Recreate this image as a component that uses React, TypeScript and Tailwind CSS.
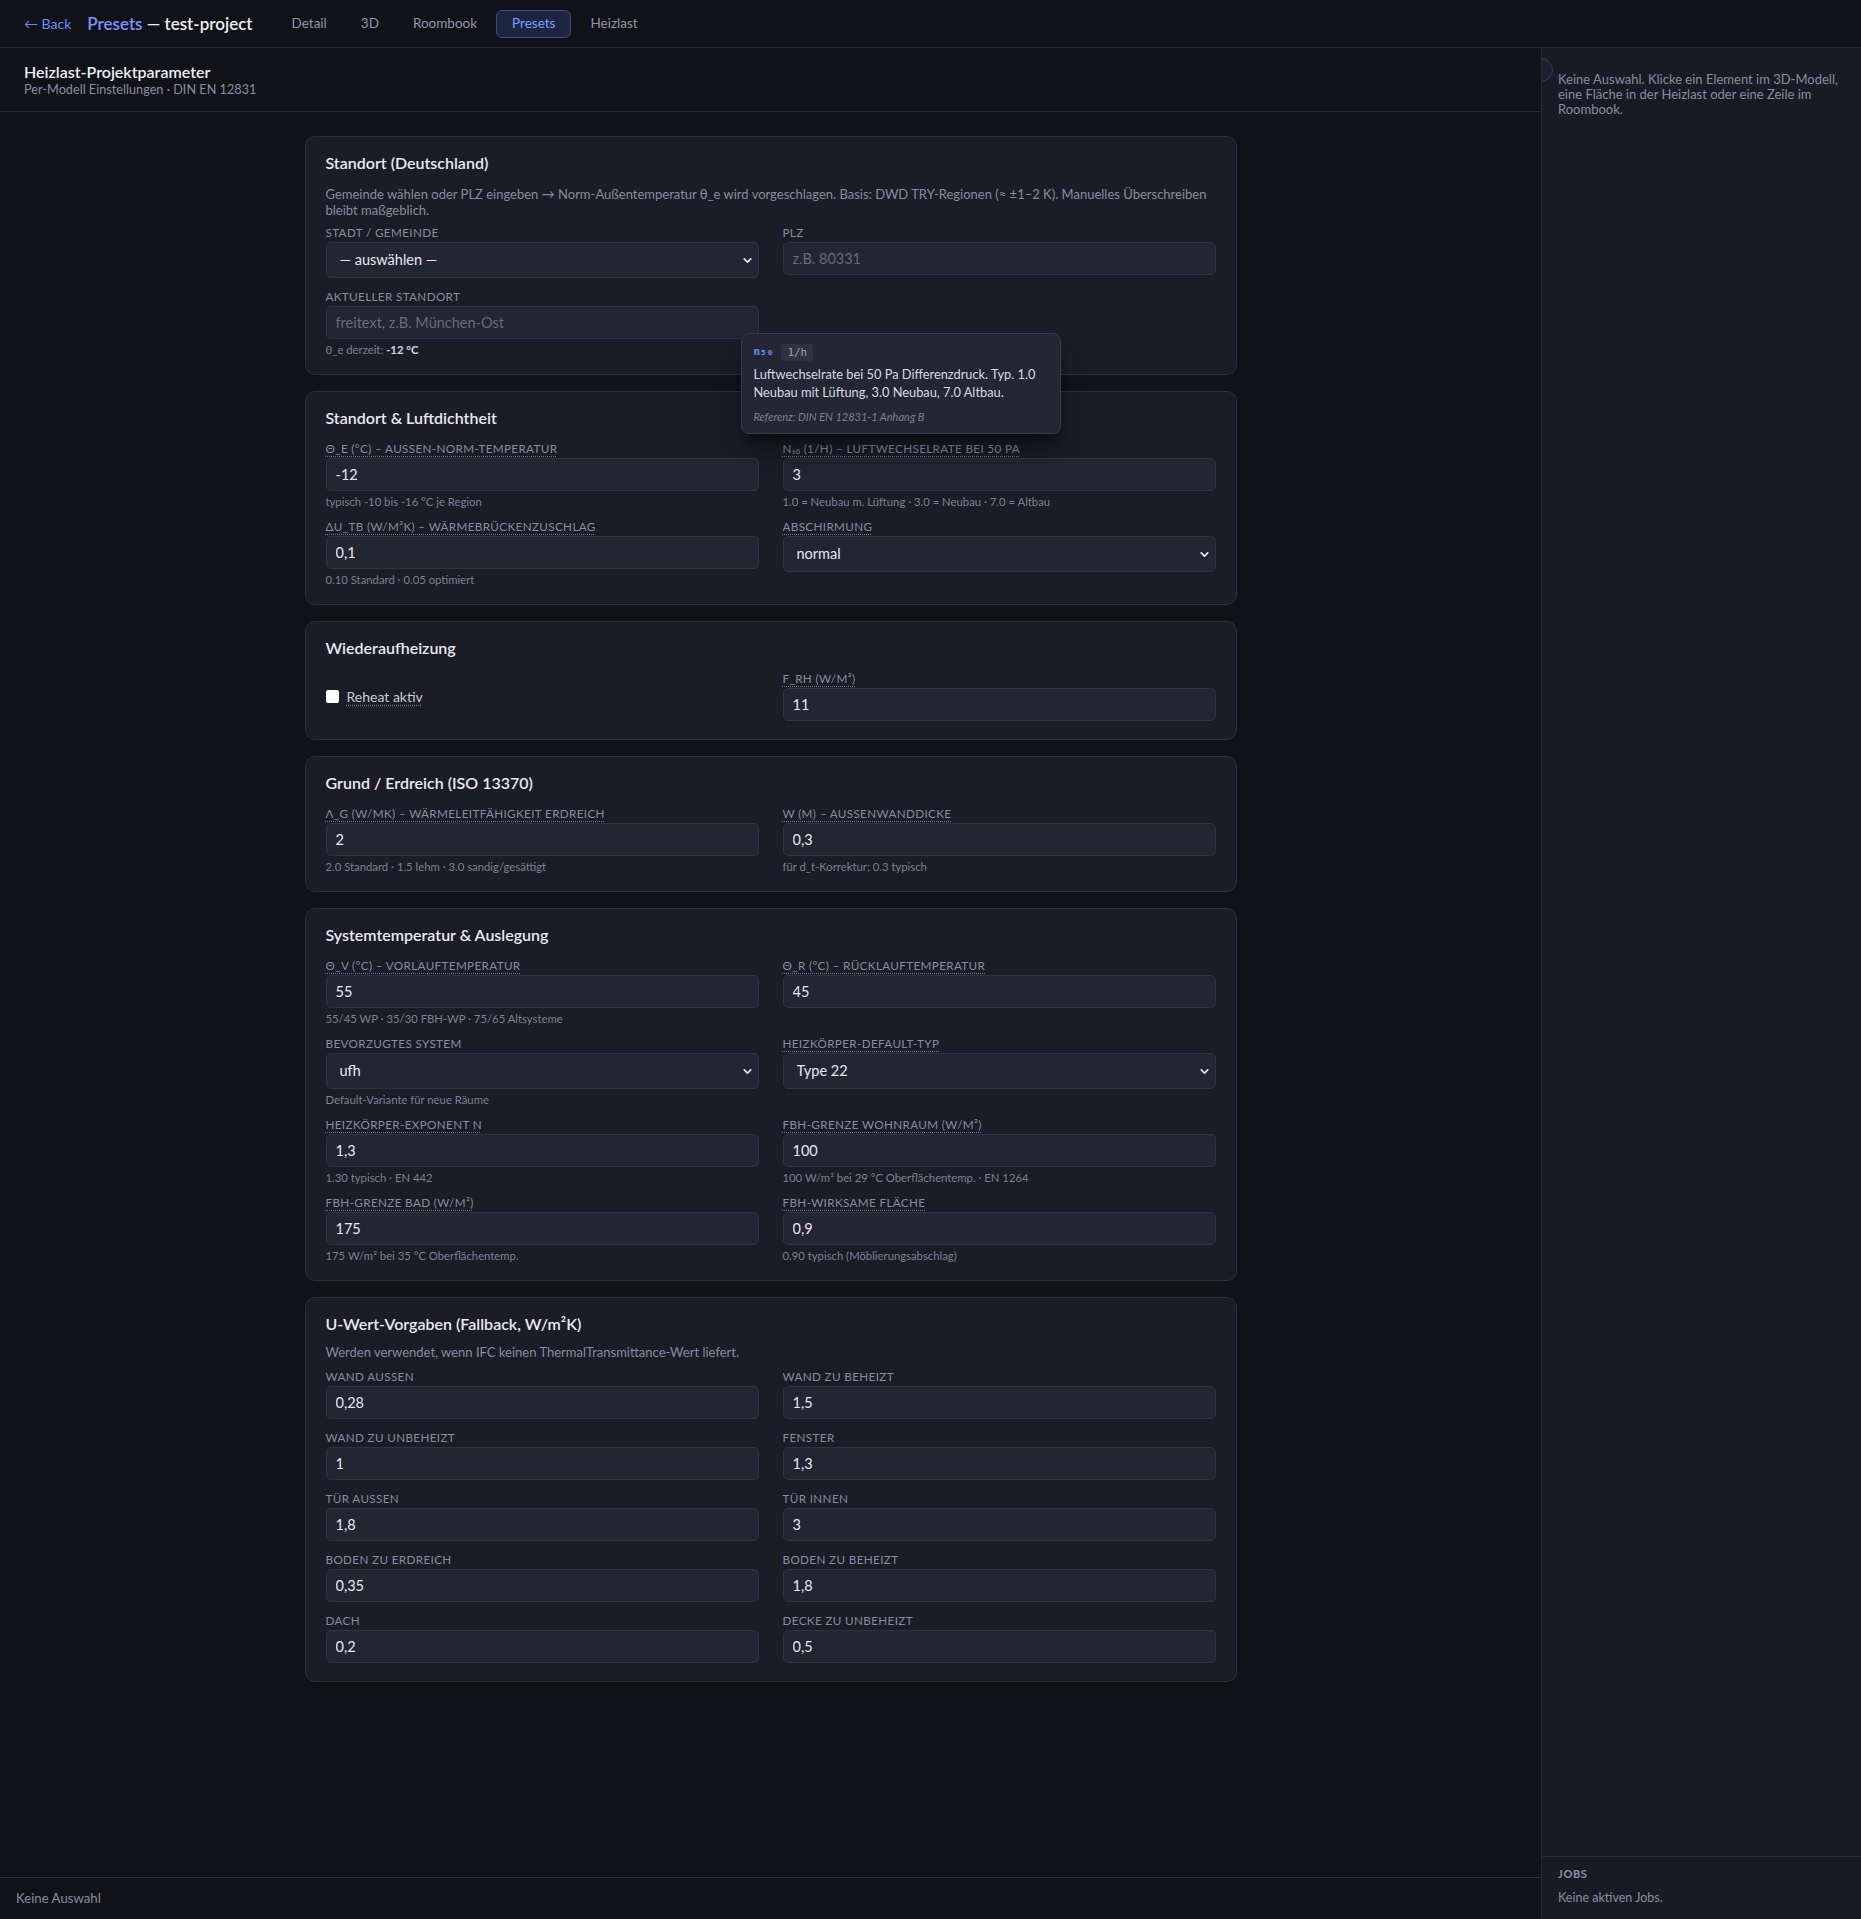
import React from "react";
import { ChevronDown, ChevronRight } from "lucide-react";

type FieldProps = {
  label: React.ReactNode;
  underline?: boolean;
  value?: string;
  placeholder?: string;
  hint?: React.ReactNode;
  select?: boolean;
};

function Field({ label, underline, value, placeholder, hint, select }: FieldProps) {
  return (
    <div className="flex flex-col">
      <label className="block text-[11.7px] leading-[14px] tracking-[0.03em] text-[#878ca0]">
        {underline ? (
          <span className="underline decoration-dotted decoration-[#697086] underline-offset-[3px]">{label}</span>
        ) : (
          label
        )}
      </label>
      {select ? (
        <div className="relative mt-[3px]">
          <select
            defaultValue={value}
            className="h-[36px] w-full appearance-none rounded-[5px] border border-[#2e3244] bg-[#222532] pl-[13px] pr-8 text-[14.5px] text-[#e6e8ee] outline-none"
          >
            <option value={value}>{value}</option>
          </select>
          <ChevronDown
            size={13}
            strokeWidth={3.2}
            className="pointer-events-none absolute right-[5px] top-[11.5px] text-[#e6e8ee]"
          />
        </div>
      ) : (
        <input
          defaultValue={value}
          placeholder={placeholder}
          className="mt-[3px] h-[33px] w-full rounded-[5px] border border-[#2e3244] bg-[#222532] px-[9px] text-[14.5px] text-[#e6e8ee] outline-none placeholder:text-[#676c7e]"
        />
      )}
      {hint ? <div className="mt-1 text-[11.3px] leading-[13px] text-[#7b8195]">{hint}</div> : null}
    </div>
  );
}

function Card({
  title,
  desc,
  descClass,
  children,
}: {
  title: string;
  desc?: string;
  descClass?: string;
  children: React.ReactNode;
}) {
  return (
    <section className="rounded-[10px] border border-[#2a2e3e] bg-[#1a1c26] px-5 pt-[15px] pb-[18px]">
      <h2 className="text-[16px] leading-[22px] font-semibold text-[#e8eaf0]">{title}</h2>
      {desc ? (
        <p className={"text-[13px] leading-[16px] text-[#878ca0] " + (descClass ?? "")}>{desc}</p>
      ) : (
        <div className="h-3" />
      )}
      {children}
    </section>
  );
}

const grid = "grid grid-cols-2 gap-x-6 gap-y-[11px]";

export default function App() {
  const tabs = ["Detail", "3D", "Roombook", "Presets", "Heizlast"];
  return (
    <div className="flex h-screen flex-col bg-[#111218] font-['Lato',sans-serif] text-[#e6e8ee]">
      {/* Top bar */}
      <header className="flex h-12 shrink-0 items-center border-b border-[#272a37] px-6">
        <span className="text-[14px] text-[#6d8bff]">← Back</span>
        <span className="ml-4 text-[17px] font-semibold">
          <span className="text-[#7a96ff]">Presets</span>
          <span className="text-[#eceef3]"> — test-project</span>
        </span>
        <nav className="ml-[24px] flex items-center gap-1">
          {tabs.map((t) =>
            t === "Presets" ? (
              <span
                key={t}
                className="flex h-[28px] items-center rounded-[6px] border border-[#3a4c85] bg-[#1d2540] px-[15px] text-[13.5px] text-[#809dff]"
              >
                {t}
              </span>
            ) : (
              <span key={t} className="flex h-[28px] items-center px-[15px] text-[13.5px] text-[#9196a8]">
                {t}
              </span>
            )
          )}
        </nav>
      </header>

      <div className="flex min-h-0 flex-1">
        {/* Main */}
        <main className="flex min-w-0 flex-1 flex-col">
          <div className="shrink-0 border-b border-[#272a37] px-6 py-[14px]">
            <div className="text-[16px] leading-[20px] font-semibold text-[#eceef3]">Heizlast-Projektparameter</div>
            <div className="text-[12.7px] leading-[15px] text-[#878ca0]">Per-Modell Einstellungen · DIN EN 12831</div>
          </div>

          <div className="min-h-0 flex-1 overflow-hidden pt-6">
            <div className="relative mx-auto flex w-[932px] flex-col gap-4">
              <Card
                title="Standort (Deutschland)"
                descClass="mt-[12px] mb-[7px]"
                desc="Gemeinde wählen oder PLZ eingeben → Norm-Außentemperatur θ_e wird vorgeschlagen. Basis: DWD TRY-Regionen (≈ ±1–2 K). Manuelles Überschreiben bleibt maßgeblich."
              >
                <div className={grid}>
                  <Field label="STADT / GEMEINDE" select value="— auswählen —" />
                  <Field label="PLZ" placeholder="z.B. 80331" />
                  <Field
                    label="AKTUELLER STANDORT"
                    placeholder="freitext, z.B. München-Ost"
                    hint={
                      <>
                        θ_e derzeit: <span className="font-bold text-[#d6d9e2]">-12 °C</span>
                      </>
                    }
                  />
                  <div />
                </div>
              </Card>

              <Card title="Standort & Luftdichtheit">
                <div className={grid}>
                  <Field underline label="Θ_E (°C) – AUSSEN-NORM-TEMPERATUR" value="-12" hint="typisch -10 bis -16 °C je Region" />
                  <Field
                    underline
                    label="N₅₀ (1/H) – LUFTWECHSELRATE BEI 50 PA"
                    value="3"
                    hint="1.0 = Neubau m. Lüftung · 3.0 = Neubau · 7.0 = Altbau"
                  />
                  <Field underline label="ΔU_TB (W/M²K) – WÄRMEBRÜCKENZUSCHLAG" value="0,1" hint="0.10 Standard · 0.05 optimiert" />
                  <Field underline label="ABSCHIRMUNG" select value="normal" />
                </div>
              </Card>

              <Card title="Wiederaufheizung">
                <div className={grid}>
                  <div className="flex items-center gap-2">
                    <span className="h-[13px] w-[13px] rounded-[2px] bg-white" />
                    <span className="text-[14px] text-[#c9ccd7] underline decoration-dotted decoration-[#697086] underline-offset-[3px]">
                      Reheat aktiv
                    </span>
                  </div>
                  <Field underline label="F_RH (W/M²)" value="11" />
                </div>
              </Card>

              <Card title="Grund / Erdreich (ISO 13370)">
                <div className={grid}>
                  <Field
                    underline
                    label="Λ_G (W/MK) – WÄRMELEITFÄHIGKEIT ERDREICH"
                    value="2"
                    hint="2.0 Standard · 1.5 lehm · 3.0 sandig/gesättigt"
                  />
                  <Field underline label="W (M) – AUSSENWANDDICKE" value="0,3" hint="für d_t-Korrektur; 0.3 typisch" />
                </div>
              </Card>

              <Card title="Systemtemperatur & Auslegung">
                <div className={grid}>
                  <Field underline label="Θ_V (°C) – VORLAUFTEMPERATUR" value="55" hint="55/45 WP · 35/30 FBH-WP · 75/65 Altsysteme" />
                  <Field underline label="Θ_R (°C) – RÜCKLAUFTEMPERATUR" value="45" />
                  <Field label="BEVORZUGTES SYSTEM" select value="ufh" hint="Default-Variante für neue Räume" />
                  <Field underline label="HEIZKÖRPER-DEFAULT-TYP" select value="Type 22" />
                  <Field underline label="HEIZKÖRPER-EXPONENT N" value="1,3" hint="1.30 typisch · EN 442" />
                  <Field
                    underline
                    label="FBH-GRENZE WOHNRAUM (W/M²)"
                    value="100"
                    hint="100 W/m² bei 29 °C Oberflächentemp. · EN 1264"
                  />
                  <Field underline label="FBH-GRENZE BAD (W/M²)" value="175" hint="175 W/m² bei 35 °C Oberflächentemp." />
                  <Field underline label="FBH-WIRKSAME FLÄCHE" value="0,9" hint="0.90 typisch (Möblierungsabschlag)" />
                </div>
              </Card>

              <Card
                title="U-Wert-Vorgaben (Fallback, W/m²K)"
                descClass="mt-[9px] mb-[9px]"
                desc="Werden verwendet, wenn IFC keinen ThermalTransmittance-Wert liefert."
              >
                <div className={grid}>
                  <Field label="WAND AUSSEN" value="0,28" />
                  <Field label="WAND ZU BEHEIZT" value="1,5" />
                  <Field label="WAND ZU UNBEHEIZT" value="1" />
                  <Field label="FENSTER" value="1,3" />
                  <Field label="TÜR AUSSEN" value="1,8" />
                  <Field label="TÜR INNEN" value="3" />
                  <Field label="BODEN ZU ERDREICH" value="0,35" />
                  <Field label="BODEN ZU BEHEIZT" value="1,8" />
                  <Field label="DACH" value="0,2" />
                  <Field label="DECKE ZU UNBEHEIZT" value="0,5" />
                </div>
              </Card>

              {/* Tooltip */}
              <div className="absolute left-[436px] top-[197px] z-10 w-80 rounded-lg border border-[#353a4d] bg-[#232633] px-3 pt-[10px] pb-[9px] shadow-xl shadow-black/40">
                <div className="flex h-[17px] items-center gap-2">
                  <span className="font-['DejaVu_Sans_Mono',monospace] text-[11px] font-bold text-[#6f8cff]">n₅₀</span>
                  <span className="rounded-[3px] bg-[#2f3243] px-[6px] font-['DejaVu_Sans_Mono',monospace] text-[11px] leading-[17px] text-[#9aa0b2]">
                    1/h
                  </span>
                </div>
                <p className="mt-1 text-[12.8px] leading-[18px] text-[#d8dbe4]">
                  Luftwechselrate bei 50 Pa Differenzdruck. Typ. 1.0 Neubau mit Lüftung, 3.0 Neubau, 7.0 Altbau.
                </p>
                <p className="mt-[9px] text-[11px] leading-[14px] italic text-[#7b8195]">Referenz: DIN EN 12831-1 Anhang B</p>
              </div>
            </div>
          </div>

          <div className="flex h-[42px] shrink-0 items-center border-t border-[#2a2d39] px-4 text-[13.2px] text-[#878ca0]">
            Keine Auswahl
          </div>
        </main>

        {/* Aside */}
        <aside className="relative flex w-[320px] shrink-0 flex-col overflow-hidden border-l border-[#272a37] bg-[#191b24]">
          <div className="absolute left-[-13px] top-[10px] flex h-6 w-6 items-center justify-end rounded-full border border-[#343849] bg-[#1d2030] pr-[9px]">
            <ChevronRight size={7} strokeWidth={3} className="text-[#8a90a4]" />
          </div>
          <div className="flex-1 px-4 pt-6 text-[13px] leading-[15px] text-[#878ca0]">
            Keine Auswahl. Klicke ein Element im 3D-Modell, eine Fläche in der Heizlast oder eine Zeile im Roombook.
          </div>
          <div className="shrink-0 border-t border-[#2a2d39] px-4 pt-[10px] pb-[14px]">
            <div className="text-[11px] leading-[14px] font-bold tracking-[0.06em] text-[#8a90a4]">JOBS</div>
            <div className="mt-[9px] text-[12.5px] leading-[15px] text-[#878ca0]">Keine aktiven Jobs.</div>
          </div>
        </aside>
      </div>
    </div>
  );
}
